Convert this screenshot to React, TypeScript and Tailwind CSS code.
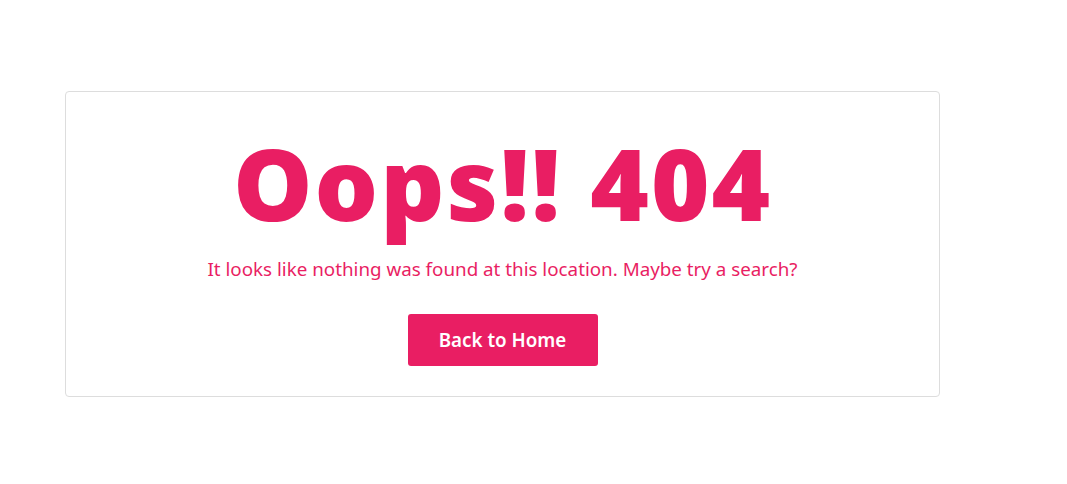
export default function App() {
  return (
    <div className="min-h-screen bg-white pt-[91px] pl-[65px]" style={{ fontFamily: '"Noto Sans", "Open Sans", sans-serif' }}>
      <div className="w-[875px] rounded border border-[#dddddd] px-6 pt-[30px] pb-[30px] text-center">
        <h1 className="text-[100px] font-black leading-[120px] tracking-[2px] text-[#e91e63]">Oops!! 404</h1>
        <p className="mt-[14px] text-[18.8px] leading-[26px] text-[#e91e63]">
          It looks like nothing was found at this location. Maybe try a search?
        </p>
        <button className="mt-[32px] h-[52px] w-[190px] rounded-[3px] bg-[#e91e63] text-[18.8px] font-semibold text-white">
          Back to Home
        </button>
      </div>
    </div>
  );
}
